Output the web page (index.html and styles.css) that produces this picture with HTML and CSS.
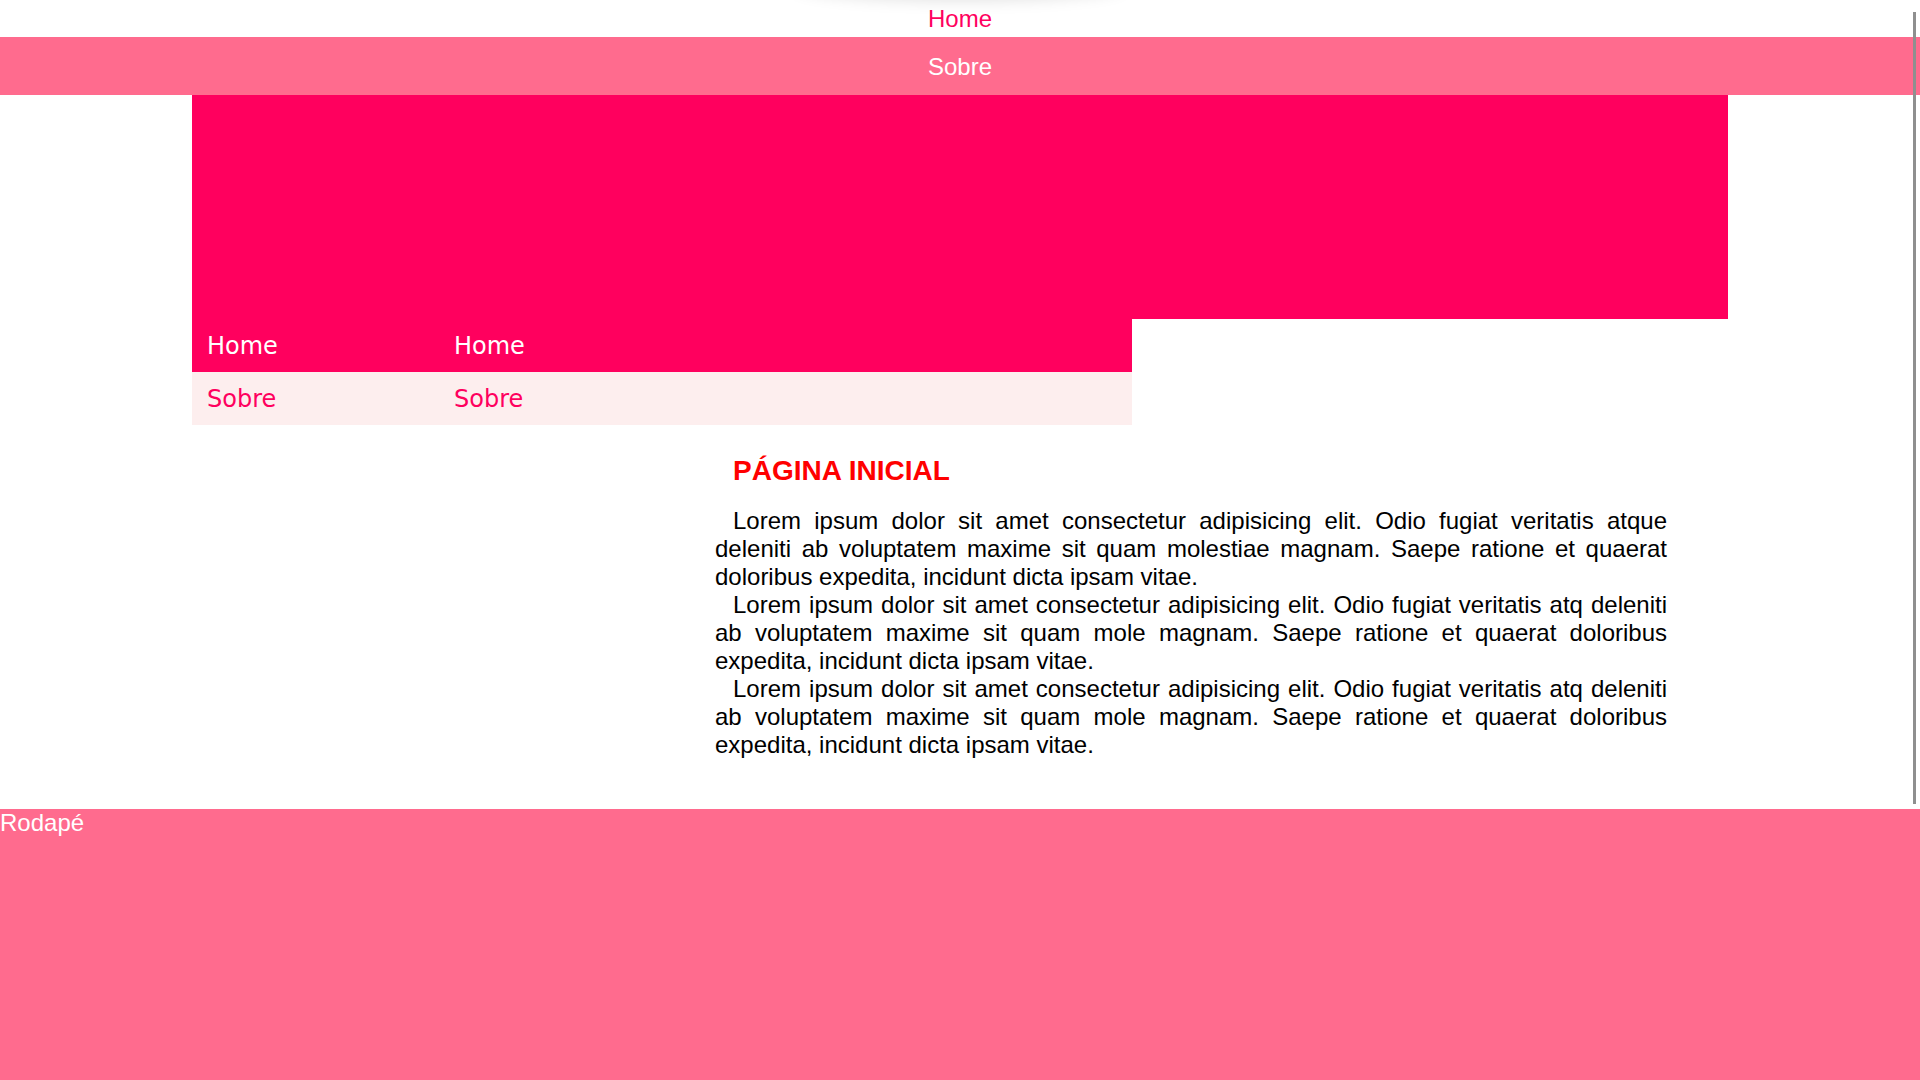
FILE: index.html
```html
<!DOCTYPE html>
<html lang="pt-BR">
<head>
<meta charset="utf-8">
<title>Página Inicial</title>
<link rel="stylesheet" href="styles.css">
</head>
<body>
<div class="top-shadow"></div>
<div class="scroll-thumb"></div>
<ul class="menu">
  <li class="menu-item menu-item--home"><a href="#">Home</a></li>
  <li class="menu-item menu-item--sobre"><a href="#">Sobre</a></li>
</ul>
<div class="container">
  <header class="banner"></header>
  <nav class="nav">
    <div class="nav-row nav-row--active"><a href="#">Home</a><a href="#">Home</a></div>
    <div class="nav-row"><a href="#">Sobre</a><a href="#">Sobre</a></div>
  </nav>
  <main class="content">
    <h1 class="title">PÁGINA INICIAL</h1>
    <p>Lorem ipsum dolor sit amet consectetur adipisicing elit. Odio fugiat veritatis atque deleniti ab voluptatem maxime sit quam molestiae magnam. Saepe ratione et quaerat doloribus expedita, incidunt dicta ipsam vitae.</p>
    <p>Lorem ipsum dolor sit amet consectetur adipisicing elit. Odio fugiat veritatis atq deleniti ab voluptatem maxime sit quam mole magnam. Saepe ratione et quaerat doloribus expedita, incidunt dicta ipsam vitae.</p>
    <p>Lorem ipsum dolor sit amet consectetur adipisicing elit. Odio fugiat veritatis atq deleniti ab voluptatem maxime sit quam mole magnam. Saepe ratione et quaerat doloribus expedita, incidunt dicta ipsam vitae.</p>
  </main>
</div>
<footer class="footer">Rodapé</footer>
</body>
</html>
```

FILE: styles.css
```css
* { box-sizing: border-box; }

html, body {
  margin: 0;
  padding: 0;
}

body {
  font-family: "Liberation Sans", Arial, sans-serif;
  font-size: 24px;
  background: #ffffff;
  position: relative;
}

a { text-decoration: none; }

.top-shadow {
  position: absolute;
  top: -30px;
  left: 50%;
  width: 330px;
  height: 30px;
  margin-left: -165px;
  border-radius: 50%;
  box-shadow: 0 0 16px rgba(0, 0, 0, 0.13);
}

.scroll-thumb {
  position: fixed;
  top: 12px;
  right: 4px;
  width: 3px;
  height: 792px;
  background: #8f8f8f;
  z-index: 10;
}

.menu {
  list-style: none;
  margin: 0;
  padding: 0;
  text-align: center;
}

.menu-item a {
  display: block;
}

.menu-item--home {
  padding: 5px 0 4px;
}

.menu-item--home a {
  color: #ff005e;
}

.menu-item--sobre {
  background: #ff6b8e;
  padding: 16px 0 14px;
}

.menu-item--sobre a {
  color: #ffffff;
}

.container {
  width: 1536px;
  margin: 0 auto;
}

.banner {
  height: 224px;
  background: #ff005e;
}

.nav {
  width: 940px;
  font-family: "DejaVu Sans", Verdana, sans-serif;
  font-size: 24px;
}

.nav-row {
  display: grid;
  grid-template-columns: 247px 1fr;
  background: #fdeeee;
}

.nav-row a {
  display: block;
  padding: 12.5px 13px 12.5px 15px;
  color: #ff005e;
}

.nav-row--active {
  background: #ff005e;
}

.nav-row--active a {
  color: #ffffff;
}

.content {
  margin: 0 61px 0 523px;
  text-indent: 18px;
  text-align: justify;
}

.title {
  margin: 30px 0 20px;
  font-size: 28px;
  font-weight: bold;
  color: #ff0000;
  text-align: left;
}

.content p {
  margin: 0;
  line-height: 28px;
  color: #000000;
}

.footer {
  margin-top: 50px;
  min-height: 640px;
  background: #ff6b8e;
  color: #ffffff;
}
```
